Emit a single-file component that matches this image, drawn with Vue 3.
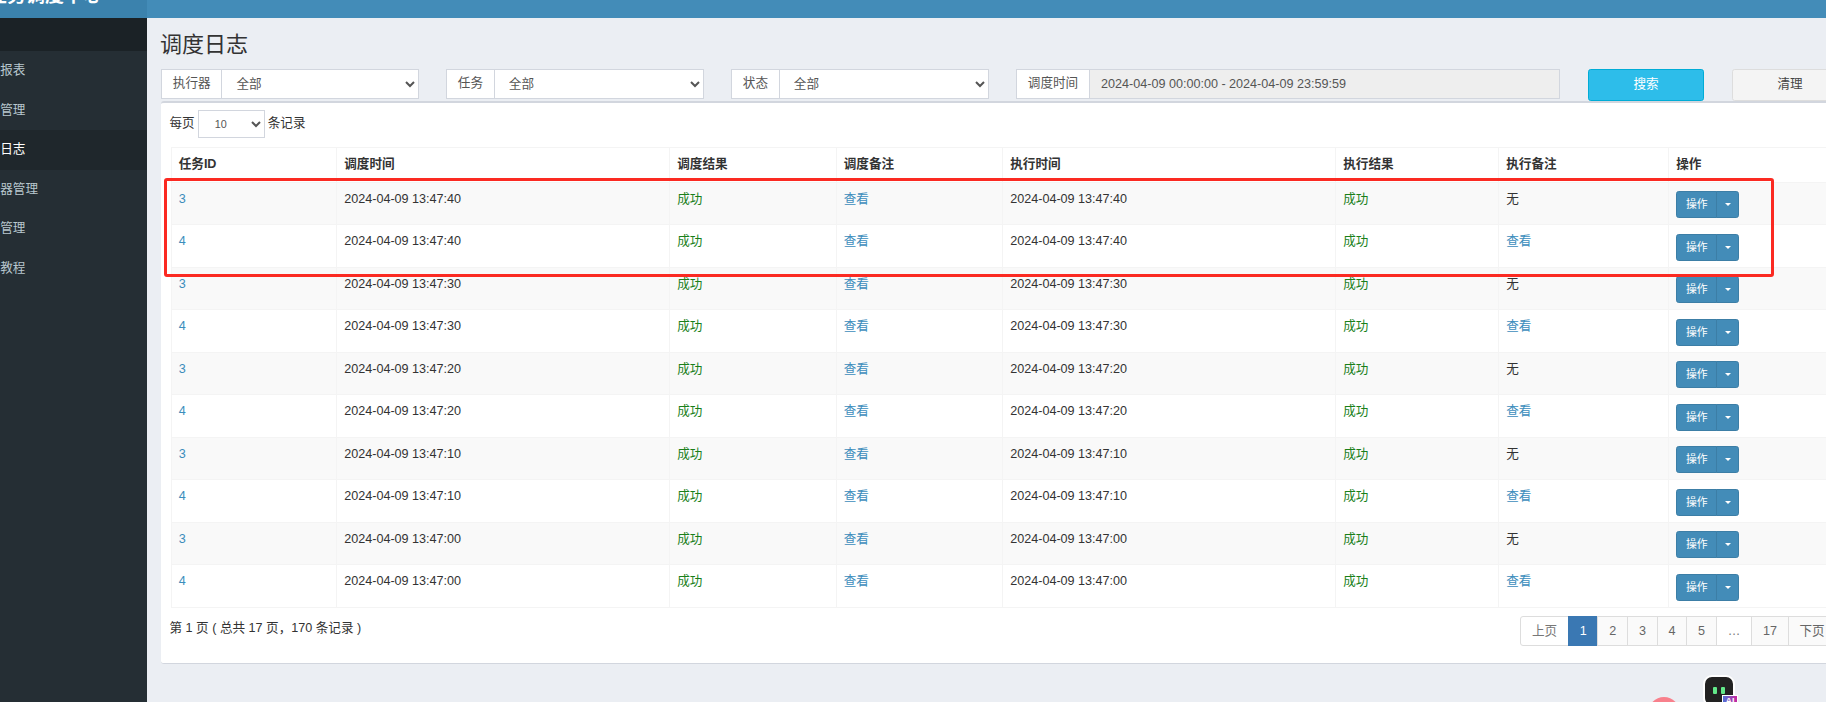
<template>
  <div class="viewport">
    <div class="page">
      <aside class="sidebar">
        <div class="logo">任务调度中心</div>
        <div class="user-panel"></div>
        <ul class="menu">
          <li v-for="item in menu" :key="item" :class="{ active: item === '调度日志' }">{{ item }}</li>
        </ul>
      </aside>

      <div class="main">
        <header class="navbar"><span class="welcome">欢迎 admin</span></header>

        <section class="content">
          <h1>调度日志</h1>

          <div class="filters">
            <div v-for="f in filters" :key="f" class="input-group">
              <span class="addon" >{{ f }}</span>
              <select class="field"><option>全部</option></select>
            </div>
            <div class="input-group time-group">
              <span class="addon">调度时间</span>
              <input class="field time" disabled value="2024-04-09 00:00:00 - 2024-04-09 23:59:59" />
            </div>
            <button class="btn-search">搜索</button>
            <button class="btn-clean">清理</button>
          </div>

          <div class="card">
            <div class="length">
              每页
              <select class="length-select"><option>10</option></select>
              条记录
            </div>

            <table>
              <colgroup>
                <col v-for="w in colWidths" :key="w.id" :style="{ width: w.px + 'px' }" />
              </colgroup>
              <thead>
                <tr>
                  <th v-for="h in headers" :key="h">{{ h }}</th>
                </tr>
              </thead>
              <tbody>
                <tr v-for="(row, i) in rows" :key="i">
                  <td><a>{{ row.id }}</a></td>
                  <td>{{ row.time }}</td>
                  <td class="ok">成功</td>
                  <td><a>查看</a></td>
                  <td>{{ row.time }}</td>
                  <td class="ok">成功</td>
                  <td>
                    <a v-if="row.id === 4">查看</a>
                    <template v-else>无</template>
                  </td>
                  <td>
                    <div class="btn-group">
                      <span class="btn-main">操作</span>
                      <span class="btn-caret"><i></i></span>
                    </div>
                  </td>
                </tr>
              </tbody>
            </table>

            <div class="foot">
              <div class="info">第 1 页 ( 总共 17 页，170 条记录 )</div>
              <ul class="pager">
                <li v-for="p in pages" :key="p" :class="{ current: p === '1', plain: p === '上页' || p === '…' }">{{ p }}</li>
              </ul>
            </div>
          </div>
        </section>
      </div>
    </div>

    <!-- 截图上的红色标注框 -->
    <div class="mark"></div>

    <!-- 右下角悬浮的小挂件 -->
    <div class="float-pink"></div>
    <div class="float-bot">
      <i></i><i></i>
      <span class="ai">AI</span>
    </div>
  </div>
</template>

<script setup>
const menu = ['运行报表', '任务管理', '调度日志', '执行器管理', '用户管理', '使用教程']
const filters = ['执行器', '任务', '状态']
const headers = ['任务ID', '调度时间', '调度结果', '调度备注', '执行时间', '执行结果', '执行备注', '操作']
const colWidths = [165.5, 333, 166.5, 166.5, 333, 163, 170, 190].map((px, id) => ({ id, px }))
const pages = ['上页', '1', '2', '3', '4', '5', '…', '17', '下页']

const rows = []
for (const sec of ['40', '30', '20', '10', '00']) {
  for (const id of [3, 4]) {
    rows.push({ id, time: `2024-04-09 13:47:${sec}` })
  }
}
</script>

<style>
html, body {
  margin: 0;
  height: 100%;
  overflow: hidden;
  background: #ebeef3;
}
</style>

<style scoped>
* {
  box-sizing: border-box;
}
.viewport {
  position: relative;
  width: 1826px;
  height: 702px;
  overflow: hidden;
  background: #ebeef3;
  color: #333;
  font: 12.6px/18px "Liberation Sans", "Noto Sans CJK SC", sans-serif;
}
/* 页面是滚动过的：左边和顶部都被裁掉一截 */
.page {
  display: flex;
  width: 2000px;
  height: 760px;
  margin: -27.5px 0 0 -60px;
}
.sidebar {
  flex: 0 0 207px;
  background: #252e34;
}
.logo {
  height: 45px;
  padding-left: 3px;
  background: #3b82ad;
  color: #fff;
  font-size: 19px;
  font-weight: bold;
  line-height: 46px;
  text-align: center;
}
.user-panel {
  height: 33.5px;
  background: #1b2226;
}
.menu {
  margin: 0;
  padding: 0;
  list-style: none;
}
.menu li {
  height: 39.6px;
  padding-left: 35px;
  color: #b8c7ce;
  line-height: 39px;
}
.menu li.active {
  background: #1f272c;
  color: #fff;
}
.main {
  flex: 1;
  min-width: 0;
}
.navbar {
  display: flex;
  height: 45px;
  padding-right: 88px;
  justify-content: flex-end;
  background: #438cb8;
}
.welcome {
  color: #fff;
  line-height: 45px;
  font-size: 12.6px;
  margin-top: -3px;
}
.content {
  padding: 0 0 0 14px;
}
h1 {
  margin: 0 0 0 -1px;
  padding-top: 15px;
  height: 51.5px;
  font-size: 22px;
  font-weight: 400;
  line-height: 24px;
}
.filters {
  display: flex;
  height: 32px;
  align-items: flex-start;
}
.input-group {
  display: flex;
  width: 258px;
  height: 30px;
  margin-right: 27px;
}
.addon {
  flex: none;
  padding: 0 10.8px;
  border: 1px solid #d2d6de;
  background: #fff;
  color: #555;
  line-height: 27px;
  white-space: nowrap;
}
.field {
  flex: 1;
  min-width: 0;
  margin-left: -1px;
  padding: 0 10px;
  border: 1px solid #d2d6de;
  border-radius: 0;
  background: #fff;
  color: #555;
  font: inherit;
  outline: 0;
}
.time-group {
  width: 544px;
  margin-right: 28px;
}
.time {
  padding-left: 11px;
  background: #eee;
}
.btn-search,
.btn-clean {
  width: 116px;
  height: 32px;
  margin-right: 28px;
  padding: 0 0 3px;
  flex: none;
  border-radius: 2.7px;
  font: inherit;
}
.btn-search {
  border: 1px solid #00acd6;
  background: #2dbdea;
  color: #fff;
}
.btn-clean {
  border: 1px solid #ddd;
  background: #f4f4f4;
  color: #444;
}
.card {
  width: 1750px;
  height: 563px;
  padding: 0 0 0 9.5px;
  border-top: 2px solid #d2d6de;
  border-bottom: 1px solid #d2d6de;
  border-radius: 3px;
  background: #fff;
}
.length {
  display: flex;
  height: 44px;
  margin-left: -1px;
  padding-top: 7px;
  align-items: flex-start;
  gap: 3px;
  line-height: 27px;
}
.length-select {
  width: 67px;
  height: 28px;
  padding: 0 12px;
  border: 1px solid #d2d6de;
  border-radius: 0;
  background: #fff;
  color: #555;
  font-size: 10.8px;
}
table {
  width: 1687px;
  border-collapse: collapse;
  table-layout: fixed;
  border: 1px solid #f4f4f4;
}
th,
td {
  padding: 7px 7.2px 4.5px;
  border: 1px solid #f4f4f4;
  text-align: left;
  vertical-align: top;
}
th {
  height: 34.5px;
  font-weight: bold;
}
tbody tr {
  height: 42.5px;
}
tbody tr:nth-child(odd) {
  background: #f9f9f9;
}
a {
  color: #3c8dbc;
}
.ok {
  color: #1a7f1a;
}
.btn-group {
  display: flex;
  height: 27px;
  margin-top: 1.5px;
  color: #fff;
  font-size: 10.8px;
  line-height: 25px;
}
.btn-main,
.btn-caret {
  border: 1px solid #3c7ea6;
  background: #438cb8;
}
.btn-main {
  width: 41px;
  border-radius: 2.7px 0 0 2.7px;
  text-align: center;
}
.btn-caret {
  display: flex;
  width: 23px;
  margin-left: -1px;
  align-items: center;
  justify-content: center;
  border-radius: 0 2.7px 2.7px 0;
}
.btn-caret i {
  border-top: 3.6px solid #fff;
  border-right: 3.6px solid transparent;
  border-left: 3.6px solid transparent;
}
.foot {
  display: flex;
  width: 1687px;
  padding-top: 8px;
  padding-right: 21px;
  justify-content: space-between;
  align-items: flex-start;
}
.info {
  padding-top: 3px;
  margin-left: -1px;
}
.pager {
  display: flex;
  margin: 0;
  padding: 0;
  list-style: none;
  color: #666;
  border-radius: 3px;
}
.pager li {
  height: 30px;
  margin-left: -1px;
  padding: 5px 10.8px;
  border: 1px solid #ddd;
  background: #fafafa;
  white-space: nowrap;
}
.pager li.plain {
  background: #fff;
  color: #777;
}
.pager li:first-child {
  border-radius: 3px 0 0 3px;
}
.pager li.current {
  border-color: #3a78b3;
  background: #3a78b3;
  color: #fff;
}
.mark {
  position: absolute;
  left: 164px;
  top: 177.5px;
  width: 1610px;
  height: 99.5px;
  border: 3px solid #fb2a22;
  border-radius: 3px;
}
.float-pink {
  position: absolute;
  left: 1648px;
  top: 697px;
  width: 32px;
  height: 32px;
  border-radius: 50%;
  background: #f8808c;
}
.float-bot {
  position: absolute;
  left: 1703px;
  top: 675px;
  display: flex;
  width: 32px;
  height: 32px;
  padding-top: 10px;
  justify-content: center;
  gap: 4px;
  border: 2px solid #fff;
  border-radius: 9px;
  background: #222;
}
.float-bot i {
  width: 4px;
  height: 7px;
  border-radius: 1px;
  background: #63e98a;
}
.ai {
  position: absolute;
  right: -5px;
  top: 18px;
  width: 16px;
  height: 14px;
  background: linear-gradient(90deg, #4f72d8, #c8259e);
  border: 1px solid #fff;
  color: #fff;
  font-size: 9px;
  font-weight: bold;
  line-height: 11px;
  text-align: center;
}
</style>
